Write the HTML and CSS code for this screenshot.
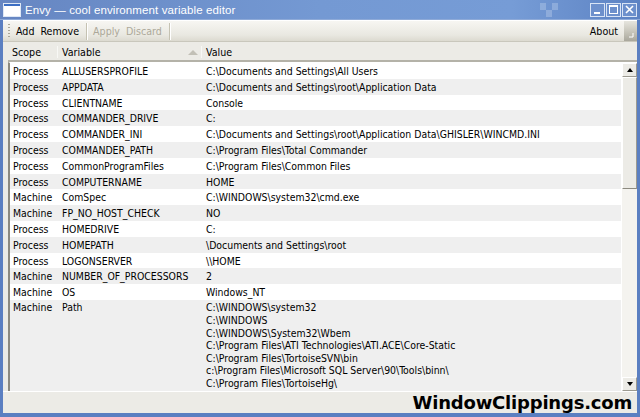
FILE: index.html
```html
<!DOCTYPE html>
<html lang="en">
<head>
    <meta charset="UTF-8">
    <title>Envy</title>
    <link rel="stylesheet" href="styles.css">
</head>
<body>
    <div class="window">
        <div class="titlebar">
            <svg class="app-icon" width="18" height="14" viewBox="0 0 18 14">
                <rect x="0.5" y="0.5" width="17" height="13" fill="#fff" stroke="#dfe8f5"/>
                <rect x="1" y="1" width="16" height="2" fill="#3d6fc4"/>
            </svg>
            <span class="title">Envy — cool environment variable editor</span>
            <div class="checker"><i></i><i></i><i></i><i></i><i></i><i></i></div>
            <div class="caption-btns">
                <div class="cbtn"><svg width="13" height="12" viewBox="0 0 13 12"><rect x="3" y="8" width="6" height="2" fill="#fff"/></svg></div>
                <div class="cbtn"><svg width="13" height="12" viewBox="0 0 13 12"><rect x="2.5" y="1.5" width="8" height="8" fill="none" stroke="#fff"/><rect x="2" y="1" width="9" height="2" fill="#fff"/></svg></div>
                <div class="cbtn"><svg width="13" height="12" viewBox="0 0 13 12"><path d="M3 2 L10 9 M10 2 L3 9" stroke="#fff" stroke-width="1.6"/></svg></div>
            </div>
        </div>
        <div class="client">
            <div class="toolbar">
                <div class="tb-area">
                    <span class="grip"></span>
                    <span class="tbtn">Add</span>
                    <span class="tbtn">Remove</span>
                    <span class="sep"></span>
                    <span class="tbtn off">Apply</span>
                    <span class="tbtn off">Discard</span>
                    <span class="sep"></span>
                    <span class="spacer"></span>
                    <span class="tbtn">About</span>
                </div>
                <div class="tb-more">
                    <svg width="9" height="9" viewBox="0 0 9 9"><path d="M7 3 L7 7 L3 7" stroke="#fff" fill="none"/></svg>
                </div>
            </div>
            <div class="grid">
                <div class="head">
                    <div class="hcell c-scope">Scope</div>
                    <div class="hcell c-var">Variable <span class="sort"></span></div>
                    <div class="hcell c-val">Value</div>
                </div>
                <div class="body">
                    <div class="rows" id="rows"></div>
                    <div class="vscroll">
                        <div class="sbtn"><span class="tri up"></span></div>
                        <div class="thumb"></div>
                        <div class="track"></div>
                        <div class="sbtn"><span class="tri down"></span></div>
                    </div>
                </div>
            </div>
            <div class="statusbar">
                <span class="mark">WindowClippings.com</span>
            </div>
        </div>
    </div>

    <script>
        var vars = [
            ["Process", "ALLUSERSPROFILE", "C:\\Documents and Settings\\All Users"],
            ["Process", "APPDATA", "C:\\Documents and Settings\\root\\Application Data"],
            ["Process", "CLIENTNAME", "Console"],
            ["Process", "COMMANDER_DRIVE", "C:"],
            ["Process", "COMMANDER_INI", "C:\\Documents and Settings\\root\\Application Data\\GHISLER\\WINCMD.INI"],
            ["Process", "COMMANDER_PATH", "C:\\Program Files\\Total Commander"],
            ["Process", "CommonProgramFiles", "C:\\Program Files\\Common Files"],
            ["Process", "COMPUTERNAME", "HOME"],
            ["Machine", "ComSpec", "C:\\WINDOWS\\system32\\cmd.exe"],
            ["Machine", "FP_NO_HOST_CHECK", "NO"],
            ["Process", "HOMEDRIVE", "C:"],
            ["Process", "HOMEPATH", "\\Documents and Settings\\root"],
            ["Process", "LOGONSERVER", "\\\\HOME"],
            ["Machine", "NUMBER_OF_PROCESSORS", "2"],
            ["Machine", "OS", "Windows_NT"],
            ["Machine", "Path", "C:\\WINDOWS\\system32\nC:\\WINDOWS\nC:\\WINDOWS\\System32\\Wbem\nC:\\Program Files\\ATI Technologies\\ATI.ACE\\Core-Static\nC:\\Program Files\\TortoiseSVN\\bin\nc:\\Program Files\\Microsoft SQL Server\\90\\Tools\\binn\\\nC:\\Program Files\\TortoiseHg\\"]
        ];
        var box = document.getElementById("rows");
        vars.forEach(function (v) {
            var row = document.createElement("div");
            row.className = "row";
            v.forEach(function (text, i) {
                var cell = document.createElement("div");
                cell.className = ["cell c-scope", "cell c-var", "cell c-val"][i];
                cell.textContent = text;
                row.appendChild(cell);
            });
            box.appendChild(row);
        });
    </script>
</body>
</html>
```

FILE: styles.css
```css
html, body { margin: 0; padding: 0; }
body { width: 640px; height: 417px; overflow: hidden; font-family: "DejaVu Sans Condensed", "DejaVu Sans", sans-serif; font-stretch: semi-condensed; font-size: 10.4px; color: #000; background: #fff; }

.window { width: 640px; height: 417px; box-sizing: border-box; display: flex; flex-direction: column; background: #5b7fc1; padding: 0 3px 4px 3px; }

.titlebar { height: 19px; margin: 0 -3px; padding: 0 3px; display: flex; align-items: center; background: linear-gradient(to right, #6686c2, #7499d3 50%, #769cd6 80%, #5c82c3); border-bottom: 1px solid #8eaad8; }
.app-icon { margin: 0 4px 0 0; }
.title { color: #fff; font-family: "Liberation Sans", Arial, sans-serif; font-stretch: normal; font-size: 11.5px; letter-spacing: 0.1px; flex: 1; }
.checker { width: 18px; height: 14px; display: grid; grid-template-columns: repeat(3, 6px); grid-template-rows: repeat(2, 7px); margin-right: 32px; opacity: 0.35; }
.checker i { display: block; background: #c8d8f0; }
.checker i:nth-child(2), .checker i:nth-child(4), .checker i:nth-child(6) { background: transparent; }
.caption-btns { display: flex; gap: 1px; }
.cbtn { width: 13px; height: 12px; border: 1px solid #d9e4f5; display: flex; align-items: center; justify-content: center; background: #6d90cc; }

.client { flex: 1; display: flex; flex-direction: column; background: #ecebe6; min-height: 0; }

.toolbar { height: 21px; display: flex; border-top: 1px solid #fff; }
.tb-area { flex: 1; display: flex; align-items: center; padding-left: 5px; background: linear-gradient(#f7f6f2, #e9e8e1 70%, #dcdad0); border-bottom: 1px solid #c9c7bc; }
.grip { width: 2px; height: 15px; margin-right: 6px; background: repeating-linear-gradient(#a8a698 0 1px, transparent 1px 3px); }
.tbtn { padding: 0 3px 0 0; margin-right: 3px; font-size: 10.6px; }
.tbtn.off { color: #aca899; }
.sep { width: 1px; height: 17px; background: #c5c2b2; border-right: 1px solid #fff; margin: 0 5px 0 1px; }
.spacer { flex: 1; }
.tb-more { width: 13px; display: flex; align-items: flex-end; justify-content: center; padding-bottom: 2px; box-sizing: border-box; background: linear-gradient(#e6e5de, #c3c1b6 60%, #a9a79c); border-bottom: 1px solid #c9c7bc; }

.grid { flex: 1; display: flex; flex-direction: column; margin: 1px 0 0 5px; min-height: 0; }
.head { height: 17px; display: flex; align-items: center; border-bottom: 2px solid #b4b2a8; }
.hcell { box-sizing: border-box; padding-left: 4px; font-size: 10.6px; position: relative; }
.c-scope { width: 49px; }
.c-var { width: 144px; }
.c-val { flex: 1; }
.head .c-var { border-left: 1px solid #f8f8f5; }
.head .c-val { border-left: 1px solid #f8f8f5; }
.sort { position: absolute; right: 3px; top: 4px; width: 0; height: 0; border-left: 5px solid transparent; border-right: 5px solid transparent; border-bottom: 5px solid #c2c0b6; }

.body { flex: 1; display: flex; min-height: 0; border-left: 2px solid #8c8a80; border-top: 1px solid #fff; }
.rows { flex: 1; overflow: hidden; background: #efefef; }
.row { display: flex; height: 15.8px; }
.row:nth-child(odd) { background: #fff; }
.row:last-child { background: #efefef; height: auto; }
.cell { box-sizing: border-box; padding: 2px 3px 1.5px 3px; line-height: 12.6px; white-space: pre; }
.row:last-child .cell { padding-top: 1.5px; }

.vscroll { width: 15px; display: flex; flex-direction: column; background: #f4f3ef; border-left: 1px solid #fff; }
.sbtn { height: 14px; box-sizing: border-box; background: #ecebe6; border: 1px solid #fff; border-right-color: #9c9a90; border-bottom-color: #9c9a90; display: flex; align-items: center; justify-content: center; }
.thumb { height: 112px; box-sizing: border-box; background: #ecebe6; border: 1px solid #fff; border-right-color: #9c9a90; border-bottom-color: #8c8a80; }
.track { flex: 1; }
.tri { width: 0; height: 0; border-left: 3.5px solid transparent; border-right: 3.5px solid transparent; }
.tri.up { border-bottom: 4px solid #000; }
.tri.down { border-top: 4px solid #000; }

.statusbar { height: 21px; display: flex; align-items: center; justify-content: flex-end; padding-right: 5px; border-top: 1px solid #fff; background: #ecebe6; }
.mark { font-family: "DejaVu Sans", Verdana, sans-serif; font-stretch: normal; font-weight: bold; font-size: 18px; letter-spacing: -0.2px; }
```
